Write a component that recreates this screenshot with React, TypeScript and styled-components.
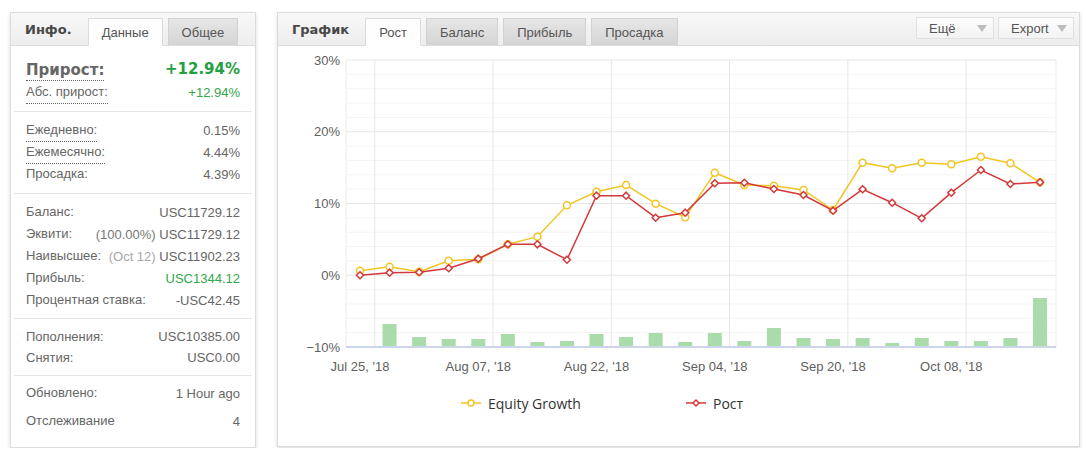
import React from 'react';
import styled, {createGlobalStyle} from "styled-components";

const GlobalStyle = createGlobalStyle`
    body {
        margin: 0;
        background: #fff;
        font-family: "Liberation Sans", Arial, sans-serif;
    }
`

// ---------- data ----------

const equity = [0.63, 1.19, 0.49, 2.03, 2.22, 4.31, 5.37, 9.75, 11.64, 12.58, 9.97, 8.08,
    14.29, 12.58, 12.48, 11.88, 9.09, 15.69, 14.91, 15.69, 15.46, 16.52, 15.6, 12.95]
const growth = [0, 0.36, 0.41, 0.97, 2.31, 4.31, 4.31, 2.17, 11.09, 11.09, 8.02, 8.72,
    12.82, 12.9, 12.02, 11.18, 9.0, 11.98, 10.11, 7.94, 11.51, 14.67, 12.72, 12.95]
// deposit bars, px above the lower axis (first point has none)
const bars = [0, 23, 10, 8, 8, 13, 5, 6, 13, 10, 14, 5, 14, 6, 19, 9, 8, 9, 4, 9, 6, 6, 9, 49]
const dates = ["Jul 25, '18", "Aug 07, '18", "Aug 22, '18", "Sep 04, '18", "Sep 20, '18", "Oct 08, '18"]

const W = 801
const H = 340
const LEFT = 68
const RIGHT = 778
const TOP = 14
const BOTTOM = 301
const X0 = 82
const STEP = 680 / 23

const xAt = (i: number) => X0 + i * STEP
const yAt = (v: number) => TOP + (30 - v) * (BOTTOM - TOP) / 40
const line = (vals: number[]) => vals.map((v, i) => `${xAt(i).toFixed(1)},${yAt(v).toFixed(1)}`).join(' ')

const YELLOW = '#f2c522'
const RED = '#d3393b'

// ---------- left panel ----------

type Row = { label: string, value: string, note?: string, dotted?: boolean, tone?: 'green' }

const sections: { rows: Row[], pad: string, height: number }[] = [
    {
        pad: '7px 12px 8px', height: 22, rows: [
            {label: 'Ежедневно:', value: '0.15%', dotted: true},
            {label: 'Ежемесячно:', value: '4.44%', dotted: true},
            {label: 'Просадка:', value: '4.39%'},
        ]
    },
    {
        pad: '7px 12px', height: 22, rows: [
            {label: 'Баланс:', value: 'USC11729.12'},
            {label: 'Эквити:', value: 'USC11729.12', note: '(100.00%) '},
            {label: 'Наивысшее:', value: 'USC11902.23', note: '(Oct 12) '},
            {label: 'Прибыль:', value: 'USC1344.12', tone: 'green'},
            {label: 'Процентная ставка:', value: '-USC42.45'},
        ]
    },
    {
        pad: '7px 12px', height: 21, rows: [
            {label: 'Пополнения:', value: 'USC10385.00'},
            {label: 'Снятия:', value: 'USC0.00'},
        ]
    },
]

const InfoPanel = () => (
    <InfoBox>
        <Header>
            <Title>Инфо.</Title>
            <Tab $active>Данные</Tab>
            <Tab>Общее</Tab>
        </Header>
        <Section $pad="11px 12px 8px">
            <Row $h={24}>
                <BigLabel>Прирост:</BigLabel>
                <BigValue>+12.94%</BigValue>
            </Row>
            <Row $h={22}>
                <Label $dotted>Абс. прирост:</Label>
                <Value $tone="green">+12.94%</Value>
            </Row>
        </Section>
        {sections.map((s, k) => (
            <Section key={k} $pad={s.pad}>
                {s.rows.map(r => (
                    <Row key={r.label} $h={s.height}>
                        <Label $dotted={r.dotted}>{r.label}</Label>
                        <Value $tone={r.tone}>
                            {r.note && <Note $light={r.note.startsWith('(Oct')}>{r.note}</Note>}
                            {r.value}
                        </Value>
                    </Row>
                ))}
            </Section>
        ))}
        <Section $pad="3px 12px 12px" $last>
            <Row $h={28}>
                <Label>Обновлено:</Label>
                <Value>1 Hour ago</Value>
            </Row>
            <Row $h={28}>
                <Label>Отслеживание</Label>
                <Value>4</Value>
            </Row>
        </Section>
    </InfoBox>
)

// ---------- chart ----------

const Chart = () => {
    const minor = []
    for (let v = -8; v < 30; v += 2) if (v % 10 !== 0) minor.push(v)
    return (
        <svg width={W} height={H} viewBox={`0 0 ${W} ${H}`} style={{display: 'block'}}>
            {minor.map(v => (
                <line key={v} x1={LEFT} x2={RIGHT} y1={yAt(v)} y2={yAt(v)} stroke="#f4f4f4"/>
            ))}
            {[30, 20, 10, 0].map(v => (
                <line key={v} x1={LEFT} x2={RIGHT} y1={yAt(v)} y2={yAt(v)} stroke="#e6e6e6"/>
            ))}
            {[0, 4, 8, 12, 16, 20].map(i => (
                <line key={i} x1={xAt(i + 0.5)} x2={xAt(i + 0.5)} y1={TOP} y2={BOTTOM} stroke="#e6e6e6"/>
            ))}
            <line x1={LEFT} x2={LEFT} y1={TOP} y2={BOTTOM} stroke="#ececec"/>
            <line x1={RIGHT} x2={RIGHT} y1={TOP} y2={BOTTOM} stroke="#ececec"/>

            {bars.map((h, i) => h > 0 && (
                <rect key={i} x={xAt(i) - 7} y={BOTTOM - h} width={14} height={h} fill="#a9dbab"/>
            ))}
            <line x1={LEFT} x2={RIGHT} y1={BOTTOM} y2={BOTTOM} stroke="#ccd6eb" strokeWidth={2}/>

            {[30, 20, 10, 0, -10].map(v => (
                <text key={v} x={62} y={yAt(v) + 4.5} textAnchor="end" fontSize={13} fill="#606060"
                      fontFamily="Liberation Sans, Arial, sans-serif">
                    {v < 0 ? `\u2212${-v}%` : `${v}%`}
                </text>
            ))}
            {dates.map((d, k) => (
                <text key={d} x={xAt(k * 4)} y={325} textAnchor="middle" fontSize={13} fill="#606060"
                      fontFamily="Liberation Sans, Arial, sans-serif">{d}</text>
            ))}

            <polyline points={line(equity)} fill="none" stroke={YELLOW} strokeWidth={1.5}/>
            {equity.map((v, i) => (
                <circle key={i} cx={xAt(i)} cy={yAt(v)} r={3.5} fill="#fff" stroke={YELLOW} strokeWidth={1.5}/>
            ))}
            <polyline points={line(growth)} fill="none" stroke={RED} strokeWidth={1.5}/>
            {growth.map((v, i) => {
                const x = xAt(i), y = yAt(v)
                return <polygon key={i} points={`${x},${y - 3.5} ${x + 3.5},${y} ${x},${y + 3.5} ${x - 3.5},${y}`}
                                fill="#fff" stroke={RED} strokeWidth={1.5}/>
            })}
        </svg>
    )
}

const Marker = ({color, shape}: { color: string, shape: 'circle' | 'diamond' }) => (
    <svg width={20} height={10} viewBox="0 0 20 10">
        <line x1={0} x2={20} y1={5} y2={5} stroke={color} strokeWidth={1.5}/>
        {shape === 'circle'
            ? <circle cx={10} cy={5} r={3} fill="#fff" stroke={color} strokeWidth={1.5}/>
            : <polygon points="10,2 13,5 10,8 7,5" fill="#fff" stroke={color} strokeWidth={1.5}/>}
    </svg>
)

const Arrow = () => (
    <svg width={10} height={7} viewBox="0 0 10 7">
        <polygon points="0,0 10,0 5,7" fill="#bdbdbd"/>
    </svg>
)

const ChartPanel = () => (
    <ChartBox>
        <Header>
            <Title>График</Title>
            <Tab $active>Рост</Tab>
            <Tab>Баланс</Tab>
            <Tab>Прибыль</Tab>
            <Tab>Просадка</Tab>
            <Buttons>
                <MenuButton $w={78}>Ещё <Arrow/></MenuButton>
                <MenuButton $w={76}>Export <Arrow/></MenuButton>
            </Buttons>
        </Header>
        <Chart/>
        <Legend>
            <LegendItem><Marker color={YELLOW} shape="circle"/>Equity Growth</LegendItem>
            <LegendItem><Marker color={RED} shape="diamond"/>Рост</LegendItem>
        </Legend>
    </ChartBox>
)

export default function App() {
    return (
        <>
            <GlobalStyle/>
            <Page>
                <InfoPanel/>
                <ChartPanel/>
            </Page>
        </>
    )
}

// ---------- styles ----------

const Page = styled.div`
    display: flex;
    align-items: flex-start;
    gap: 21px;
    padding: 12px 0 0 10px;
`

const Panel = styled.div`
    background: #fff;
    border: 1px solid #dcdcdc;
    box-shadow: 0 2px 4px rgba(0, 0, 0, 0.14);
`

const InfoBox = styled(Panel)`
    width: 244px;
`

const ChartBox = styled(Panel)`
    width: 801px;
    padding-bottom: 26px;
`

const Header = styled.div`
    display: flex;
    align-items: flex-end;
    gap: 5px;
    height: 32px;
    padding-left: 14px;
    background: linear-gradient(#f8f8f8, #ededed);
    border-bottom: 1px solid #dcdcdc;
`

const Title = styled.span`
    align-self: center;
    margin-right: 11px;
    font-family: "DejaVu Sans", Verdana, sans-serif;
    font-weight: bold;
    font-size: 13px;
    color: #474747;
`

const Tab = styled.div<{ $active?: boolean }>`
    height: 26px;
    padding: 0 13px;
    margin-bottom: -1px;
    display: flex;
    align-items: center;
    font-size: 13px;
    color: #555;
    border: 1px solid ${p => p.$active ? '#dcdcdc' : '#d2d2d2'};
    border-bottom: 1px solid ${p => p.$active ? '#fff' : '#dcdcdc'};
    background: ${p => p.$active ? 'linear-gradient(#fdfdfd, #fff)' : 'linear-gradient(#e6e6e6, #d5d5d5)'};
`

const Buttons = styled.div`
    display: flex;
    gap: 4px;
    align-self: flex-start;
    margin: 4px 5px 0 auto;
`

const MenuButton = styled.div<{ $w: number }>`
    width: ${p => p.$w}px;
    height: 22px;
    box-sizing: border-box;
    display: flex;
    align-items: center;
    justify-content: space-between;
    padding: 0 6px 0 12px;
    font-size: 13px;
    color: #555;
    background: linear-gradient(#fdfdfd, #f3f3f3);
    border: 1px solid #e0e0e0;
`

const Section = styled.div<{ $pad: string, $last?: boolean }>`
    margin: 0 3px;
    padding: ${p => p.$pad};
    border-bottom: ${p => p.$last ? 'none' : '1px solid #e6e6e6'};
`

const Row = styled.div<{ $h: number }>`
    display: flex;
    align-items: center;
    justify-content: space-between;
    height: ${p => p.$h}px;
    font-size: 13px;
    color: #666;
`

const Label = styled.span<{ $dotted?: boolean }>`
    line-height: 16px;
    padding-bottom: ${p => p.$dotted ? '3px' : '0'};
    margin-bottom: ${p => p.$dotted ? '-4px' : '0'};
    border-bottom: ${p => p.$dotted ? '1px dotted #666' : 'none'};
`

const BigLabel = styled(Label)`
    font-family: "DejaVu Sans", Verdana, sans-serif;
    font-weight: bold;
    font-size: 15px;
    line-height: 18px;
    padding-bottom: 1px;
    margin-bottom: -3px;
    border-bottom: 1px dotted #666;
`

const Value = styled.span<{ $tone?: 'green' }>`
    color: ${p => p.$tone === 'green' ? '#2fa84a' : '#666'};
`

const BigValue = styled.span`
    font-family: "DejaVu Sans", Verdana, sans-serif;
    font-weight: bold;
    font-size: 15px;
    color: #22a03f;
`

const Note = styled.span<{ $light?: boolean }>`
    color: ${p => p.$light ? '#a8a8a8' : '#777'};
`

const Legend = styled.div`
    display: flex;
    align-items: center;
    height: 34px;
    padding-left: 183px;
`

const LegendItem = styled.div`
    width: 225px;
    display: flex;
    align-items: center;
    gap: 7px;
    font-family: "Open Sans", sans-serif;
    font-size: 14px;
    color: #333;
`
